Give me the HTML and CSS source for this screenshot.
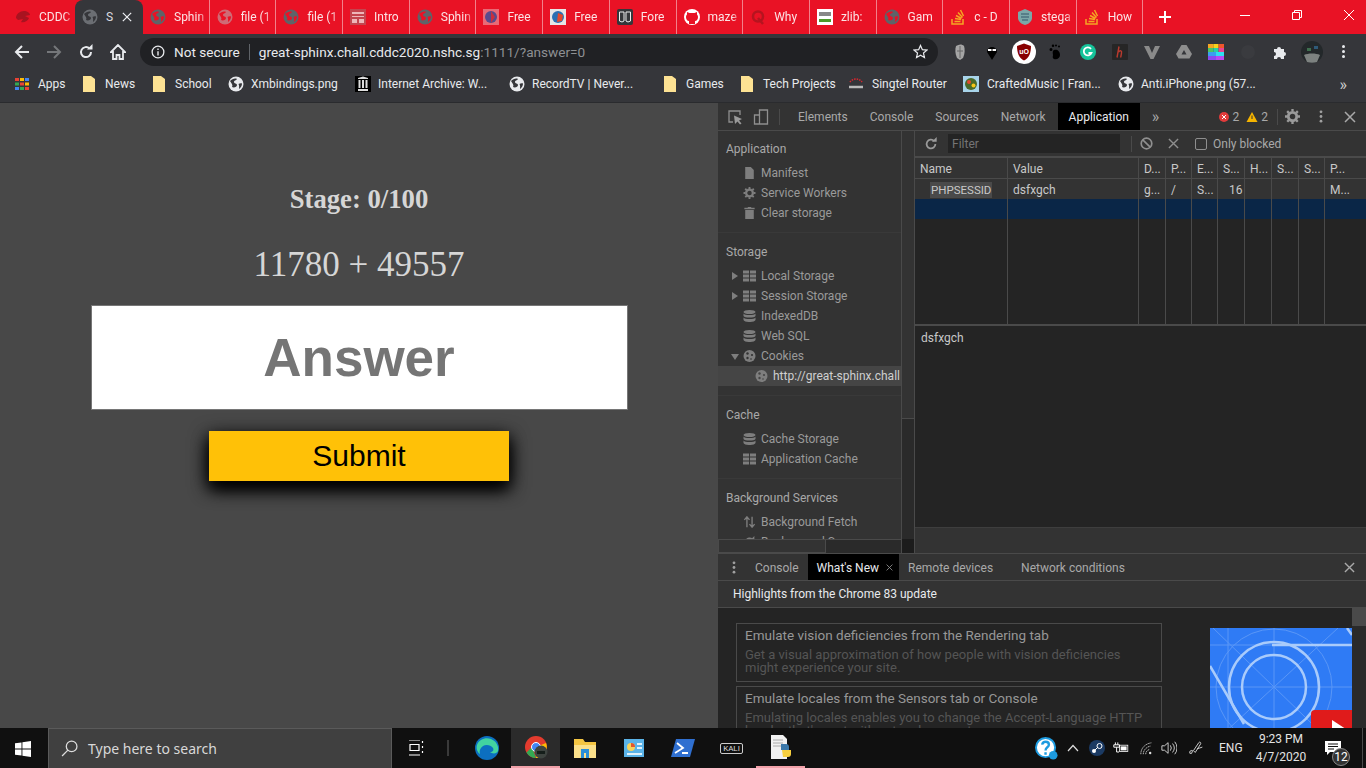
FILE: index.html
```html
<!DOCTYPE html>
<html lang="en">
<head>
    <meta charset="UTF-8">
    <meta name="viewport" content="width=device-width, initial-scale=1.0">
    <title>Sphinx</title>
    <link rel="stylesheet" href="styles.css">
</head>
<body>
    <svg class="defs" width="0" height="0">
        <symbol id="globe" viewBox="0 0 16 16">
            <circle cx="8" cy="8" r="7.5"/>
            <path class="cut" d="M2 5c2-2 5-3 7-2-1 2-3 1-3 3s3 1 3 3-3 3-5 2c1-2 0-3-2-6zM10.500 8c1-1 3-1 3.500-.5 0 2-1 4-3 5.500 0-2 .5-3-.5-5z"/>
        </symbol>
        <symbol id="folder" viewBox="0 0 12 16">
            <path d="M0 0h8l4 3v13H0z"/>
        </symbol>
        <symbol id="grid" viewBox="0 0 14 12">
            <path d="M0 0h6.500v3.400H0zM7.500 0H14v3.400H7.500zM0 4.300h6.500v3.400H0zM7.500 4.300H14v3.400H7.500zM0 8.600h6.500V12H0zM7.500 8.600H14V12H7.500z"/>
        </symbol>
        <symbol id="db" viewBox="0 0 12 12">
            <ellipse cx="6" cy="2" rx="6" ry="2"/>
            <path d="M0 3.500c1 2 11 2 12 0V6c-1 2-11 2-12 0zM0 7.500c1 2 11 2 12 0V10c-1 2.700-11 2.700-12 0z"/>
        </symbol>
        <symbol id="cookie" viewBox="0 0 12 12">
            <circle cx="6" cy="6" r="6"/>
            <g class="cut"><circle cx="4" cy="3.500" r="1.200"/><circle cx="8.500" cy="5" r="1.100"/><circle cx="4" cy="8" r="1.200"/><circle cx="7.500" cy="9" r=".8"/></g>
        </symbol>
        <symbol id="cross" viewBox="0 0 12 12">
            <path d="M1 1l10 10M11 1 1 11" fill="none" stroke="currentColor" stroke-width="1.500"/>
        </symbol>
        <symbol id="dots" viewBox="0 0 4 14">
            <circle cx="2" cy="2" r="1.500"/><circle cx="2" cy="7" r="1.500"/><circle cx="2" cy="12" r="1.500"/>
        </symbol>
        <symbol id="reload" viewBox="0 0 16 16">
            <path d="M13 8a5 5 0 1 1-1.500-3.500" fill="none" stroke="currentColor" stroke-width="2"/>
            <path d="M9 5.500h5.500V0z"/>
        </symbol>
    </svg>

    <!-- tab strip -->
    <div class="tabstrip">
        <div class="tab first"><svg class="fav" viewBox="0 0 16 16"><path fill="#a81320" d="M1 9c0-4 4-7 8-7 3 0 6 2 6 4l-5 1 4 2c-1 3-5 5-8 4l2-3-5 1z"/></svg><span class="tab-text">CDDC</span></div>
        <div class="tab active"><svg class="fav globe"><use href="#globe"/></svg><span class="tab-text">S</span><svg class="tab-close"><use href="#cross"/></svg></div>
        <div class="tab nosep"><svg class="fav globe"><use href="#globe"/></svg><span class="tab-text">Sphin</span></div>
        <div class="tab"><svg class="fav globe pale"><use href="#globe"/></svg><span class="tab-text">file (1</span></div>
        <div class="tab"><svg class="fav globe"><use href="#globe"/></svg><span class="tab-text">file (1</span></div>
        <div class="tab"><svg class="fav" viewBox="0 0 16 16"><rect width="16" height="16" fill="#c4454f"/><path fill="#eeb6ba" d="M2 3h12v2H2zM2 7h12v1H2zM2 10h5v4H2zM9 10h5v4H9z"/></svg><span class="tab-text">Intro</span></div>
        <div class="tab"><svg class="fav globe"><use href="#globe"/></svg><span class="tab-text">Sphin</span></div>
        <div class="tab"><svg class="fav" viewBox="0 0 16 16"><rect width="16" height="16" fill="#e96a76"/><circle cx="8" cy="8" r="6" fill="#5a4a8c"/><path fill="#c9303c" d="M8 2l4 6-4 6z"/></svg><span class="tab-text">Free</span></div>
        <div class="tab"><svg class="fav" viewBox="0 0 16 16"><rect width="16" height="16" fill="#e6e6e6"/><circle cx="8" cy="8" r="6" fill="#2a6fb3"/><path fill="#e2482e" d="M8 4l5 2-1 6-5 1z"/></svg><span class="tab-text">Free</span></div>
        <div class="tab"><svg class="fav" viewBox="0 0 16 16"><rect width="16" height="16" rx="2" fill="#35363a"/><path fill="none" stroke="#eee" d="M2.500 3h4.500v9l-2 1-2.500-1zM9 3h4.500v9l-2.500 1L9 12z"/></svg><span class="tab-text">Fore</span></div>
        <div class="tab"><svg class="fav" viewBox="0 0 16 16"><circle cx="8" cy="8" r="8" fill="#fff"/><path fill="#e91225" d="M5 15v-3c-2 0-3-2-3-4 0-1 .500-2 1-2.500V3l2.500 1h5L13 3v2.500c.500.500 1 1.500 1 2.500 0 2-1 4-3 4v3z"/></svg><span class="tab-text">maze</span></div>
        <div class="tab"><svg class="fav" viewBox="0 0 16 16"><circle cx="8" cy="7.500" r="5" fill="none" stroke="#b5141f" stroke-width="2.500"/><path stroke="#b5141f" stroke-width="2.500" d="M8 9l5 6"/></svg><span class="tab-text">Why</span></div>
        <div class="tab"><svg class="fav" viewBox="0 0 16 16"><rect width="16" height="16" fill="#fff"/><rect x="2" y="3" width="12" height="4" fill="#888"/><rect x="2" y="10" width="12" height="3" fill="#4c9a2a"/></svg><span class="tab-text">zlib:</span></div>
        <div class="tab"><svg class="fav globe"><use href="#globe"/></svg><span class="tab-text">Gam</span></div>
        <div class="tab"><svg class="fav" viewBox="0 0 16 16"><path fill="none" stroke="#f5a623" stroke-width="1.500" d="M2 10v5h11v-5M4.500 12.500h6M5 9.500l6 1M6 6.500l5.500 3M8 3.500l4.500 5M10.500 1l3 6"/></svg><span class="tab-text">c - D</span></div>
        <div class="tab"><svg class="fav" viewBox="0 0 16 16"><path fill="#7ba7a8" d="M8 0l7 3v6c0 3-3 6-7 7-4-1-7-4-7-7V3z"/><path stroke="#35566b" d="M4 5h8M4 8h8M5 11h6"/></svg><span class="tab-text">stega</span></div>
        <div class="tab"><svg class="fav" viewBox="0 0 16 16"><path fill="none" stroke="#f5a623" stroke-width="1.500" d="M2 10v5h11v-5M4.500 12.500h6M5 9.500l6 1M6 6.500l5.500 3M8 3.500l4.500 5M10.500 1l3 6"/></svg><span class="tab-text">How</span></div>
        <svg class="new-tab" viewBox="0 0 12 12"><path d="M6 0v12M0 6h12" stroke="#fff" stroke-width="2"/></svg>
        <div class="win-controls">
            <svg viewBox="0 0 12 12"><path d="M1 6.500h10" stroke="#fff"/></svg>
            <svg viewBox="0 0 12 12"><path d="M1.500 3.500h7v7h-7zM3.500 3.500v-2h7v7h-2" fill="none" stroke="#fff"/></svg>
            <svg viewBox="0 0 12 12"><path d="M1 1l10 10M11 1 1 11" stroke="#fff"/></svg>
        </div>
    </div>

    <!-- address bar -->
    <div class="toolbar">
        <div class="nav-btns">
            <svg viewBox="0 0 16 16"><path d="M15 8H2M8 2 2 8l6 6" fill="none" stroke="#e8eaed" stroke-width="2"/></svg>
            <svg viewBox="0 0 16 16"><path d="M1 8h13M8 2l6 6-6 6" fill="none" stroke="#75777a" stroke-width="2"/></svg>
            <svg class="plain" viewBox="0 0 16 16"><use href="#reload"/></svg>
            <svg viewBox="0 0 16 16"><path d="M8 1 1 8h2v7h3.500v-4h3v4H13V8h2z" fill="none" stroke="#e8eaed" stroke-width="1.800"/></svg>
        </div>
        <div class="omnibox">
            <svg class="info" viewBox="0 0 16 16"><circle cx="8" cy="8" r="6.700" fill="none" stroke="#e8eaed" stroke-width="1.500"/><path d="M7.200 7h1.600v5H7.200zM7.200 4h1.600v1.600H7.200z" fill="#e8eaed"/></svg>
            <span class="not-secure">Not secure</span>
            <span class="url">great-sphinx.chall.cddc2020.nshc.sg<span class="url-rest">:1111/?answer=0</span></span>
            <svg class="star" viewBox="0 0 16 16"><path d="M8 1.500 10 6l4.800.5-3.600 3.200 1 4.800L8 12l-4.200 2.500 1-4.800L1.200 6.500 6 6z" fill="none" stroke="#e8eaed" stroke-width="1.300"/></svg>
        </div>
        <div class="extensions">
            <svg viewBox="0 0 16 16"><path fill="#a5a5a5" d="M4 2c3-2 6-2 8 0 1 3 1 8-1 12l-3 2-3-2C3 10 3 5 4 2z"/><path stroke="#666" d="M8 2v12M5 7h6"/></svg>
            <svg viewBox="0 0 16 16"><path d="M8 16 3 8a5 5 0 1 1 10 0z"/><path fill="#fff" d="M4 5h3.500v2H4zM8.500 5H12v2H8.500z"/></svg>
            <svg class="ublock" viewBox="0 0 24 24"><circle cx="12" cy="12" r="12" fill="#fff"/><path fill="#800" d="M12 3.500 19 6c0 7-2 12-7 14.500C7 18 5 13 5 6z"/><text x="12" y="14" class="ub-text">uO</text></svg>
            <svg viewBox="0 0 16 16"><path d="M6 6c3-1 6 1 6 5 0 3-3 5-6 4-2-1-1-3-1-4S4 7 6 6zM3 7a1 1 0 1 1 0-3 1 1 0 0 1 0 3zM5 3a1 1 0 1 1 0-2.500A1 1 0 0 1 5 3zM8 2.500A1 1 0 1 1 8 .5a1 1 0 0 1 0 2zM11 3.500a1 1 0 1 1 0-2 1 1 0 0 1 0 2z"/></svg>
            <svg viewBox="0 0 16 16"><circle cx="8" cy="8" r="8" fill="#15c39a"/><path d="M11 5a4 4 0 1 0 .5 4H8.500" fill="none" stroke="#fff" stroke-width="1.800"/></svg>
            <svg viewBox="0 0 16 16"><rect width="16" height="16" rx="1" fill="#262626"/><path d="M7 2.500 5 13.500M6.500 8c2-2 3.500-1.500 3 1l-.8 4.500" fill="none" stroke="#b93a2e" stroke-width="1.400"/></svg>
            <svg viewBox="0 0 16 16"><path fill="#8a8a8a" d="M0 2h5l3 7 3-7h5L9.500 15h-3z"/></svg>
            <svg viewBox="0 0 16 16"><path fill="#8e8e8e" d="M5.500 1h5L16 10l-2.500 4.500h-11L0 10z"/><path fill="#35363a" d="M8 6l-2.500 4.500h5z"/></svg>
            <svg viewBox="0 0 16 16"><path fill="#f5a623" d="M0 0h5.300v4H0z"/><path fill="#f8d21c" d="M5.300 0h5.300v4H5.300z"/><path fill="#f0562c" d="M10.600 0H16v4h-5.400z"/><path fill="#4cc764" d="M0 4h5.300v4H0z"/><path fill="#2ad0a4" d="M5.300 4h5.300v4H5.300z"/><path fill="#e84393" d="M10.600 4H16v4h-5.400z"/><path fill="#3aa0f0" d="M0 8h8v4H0z"/><path fill="#2ee0f0" d="M8 8h8v4H8z"/><path fill="#8a4af0" d="M0 12h8v4H0z"/><path fill="#b84af0" d="M8 12h8v4H8z"/></svg>
            <svg viewBox="0 0 16 16"><circle cx="8" cy="8" r="7" fill="#3a3b3f"/></svg>
            <svg viewBox="0 0 16 16"><path fill="#e8eaed" d="M2 5h3a2 2 0 1 1 4 0h3v3a2 2 0 1 1 0 4v3H9a2 2 0 1 0-4 0H2v-3a2 2 0 1 0 0-4z"/></svg>
            <svg class="avatar" viewBox="0 0 22 22"><circle cx="11" cy="11" r="11" fill="#23282a"/><path fill="#7d8280" d="M3 14c4-2 12-2 16 0l-3 7c-3 1-7 1-10 0z"/><path fill="#2f5a78" d="M13 5h4v3h-4z"/><path fill="#3f6f4f" d="M6 7h4v3H6z"/></svg>
            <div class="menu-dots"><i></i><i></i><i></i></div>
        </div>
    </div>

    <!-- bookmarks -->
    <div class="bookmarks">
        <a class="bm bm-apps"><svg viewBox="0 0 14 12"><path fill="#ea4335" d="M0 0h4v3H0z"/><path fill="#fbbc05" d="M5 0h4v3H5z"/><path fill="#4285f4" d="M10 0h4v3h-4z"/><path fill="#34a853" d="M0 4.500h4v3H0z"/><path fill="#ea4335" d="M5 4.500h4v3H5z"/><path fill="#fbbc05" d="M10 4.500h4v3h-4z"/><path fill="#4285f4" d="M0 9h4v3H0z"/><path fill="#34a853" d="M5 9h4v3H5z"/><path fill="#ea4335" d="M10 9h4v3h-4z"/></svg>Apps</a>
        <a class="bm bm-news"><svg class="folder"><use href="#folder"/></svg>News</a>
        <a class="bm bm-school"><svg class="folder"><use href="#folder"/></svg>School</a>
        <a class="bm bm-xmb"><svg class="bm-globe"><use href="#globe"/></svg>Xmbindings.png</a>
        <a class="bm bm-ia"><svg viewBox="0 0 16 16"><rect width="16" height="16" fill="#000"/><path fill="#ddd" d="M3 2l5-1.500L13 2v1H3zM3.500 4h2v8h-2zM7 4h2v8H7zM10.500 4h2v8h-2zM3 13h10v2H3z"/></svg>Internet Archive: W...</a>
        <a class="bm bm-rec"><svg class="bm-globe"><use href="#globe"/></svg>RecordTV | Never...</a>
        <a class="bm bm-games"><svg class="folder"><use href="#folder"/></svg>Games</a>
        <a class="bm bm-tech"><svg class="folder"><use href="#folder"/></svg>Tech Projects</a>
        <a class="bm bm-singtel"><svg viewBox="0 0 16 16"><path d="M2 6a7 6 0 0 1 12 0" fill="none" stroke="#e0262e" stroke-width="1.500" stroke-dasharray="1.500 1"/><path d="M1 11h14" stroke="#bbb" stroke-width="2.500"/></svg>Singtel Router</a>
        <a class="bm bm-crafted"><svg viewBox="0 0 16 16"><rect width="16" height="16" fill="#a8d4ea"/><circle cx="8" cy="8" r="6" fill="#4a6a2a"/><circle cx="6" cy="6" r="2" fill="#e2482e"/><circle cx="10.500" cy="9.500" r="2" fill="#f5c518"/></svg>CraftedMusic | Fran...</a>
        <a class="bm bm-anti"><svg class="bm-globe"><use href="#globe"/></svg>Anti.iPhone.png (57...</a>
        <span class="bm-more">»</span>
    </div>

    <div class="main">
        <!-- the page itself -->
        <form class="page">
            <h3 class="stage">Stage: 0/100</h3>
            <p class="sum">11780 + 49557</p>
            <input class="answer" type="text" placeholder="Answer">
            <button class="submit" type="button">Submit</button>
        </form>

        <!-- devtools -->
        <div class="devtools">
            <div class="dt-tabs">
                <svg class="dt-ico" viewBox="0 0 16 16"><path d="M13 6V2H2v11h4" fill="none" stroke="#8f8f8f" stroke-width="1.300"/><path d="M7 6.500 15 10l-3 1.500 2.500 3-1.500 1-2.500-3L8 15z" fill="#9a9a9a"/></svg>
                <svg class="dt-ico" viewBox="0 0 16 16"><path d="M6.500 1h8v14h-8zM6.500 6h-5v9h5" fill="none" stroke="#8f8f8f" stroke-width="1.300"/></svg>
                <span class="dt-divider"></span>
                <span class="dt-tab">Elements</span>
                <span class="dt-tab">Console</span>
                <span class="dt-tab">Sources</span>
                <span class="dt-tab">Network</span>
                <span class="dt-tab current">Application</span>
                <span class="dt-more">»</span>
                <div class="dt-status">
                    <svg viewBox="0 0 12 12"><circle cx="6" cy="6" r="5" fill="#e23b3b"/><path d="M4 4l4 4M8 4l-4 4" stroke="#fff"/></svg><span>2</span>
                    <svg viewBox="0 0 12 12"><path d="M6 1l5.500 10H.5z" fill="#f5b400"/><path d="M6 4.500v3.500" stroke="#333"/></svg><span>2</span>
                    <span class="dt-divider"></span>
                    <svg class="gear" viewBox="0 0 16 16"><circle cx="8" cy="8" r="4.500" fill="none" stroke="#9a9a9a" stroke-width="3"/><path d="M8 0v16M0 8h16M2.300 2.300l11.400 11.400M13.700 2.300 2.300 13.700" stroke="#9a9a9a" stroke-width="2.500" stroke-dasharray="2.500 11 2.500"/></svg>
                    <svg class="dt-dots"><use href="#dots"/></svg>
                    <svg class="dt-close"><use href="#cross"/></svg>
                </div>
            </div>

            <div class="dt-body">
                <div class="sidebar-wrap">
                    <div class="sidebar">
                        <div class="side-group">
                            <div class="side-head">Application</div>
                            <div class="side-row"><svg class="side-ico" viewBox="0 0 12 14"><path d="M1 0h6.500L11 3.500V14H1z"/></svg>Manifest</div>
                            <div class="side-row"><svg class="side-ico" viewBox="0 0 16 16"><circle cx="8" cy="8" r="4.500" fill="none" stroke="currentColor" stroke-width="3"/><path d="M8 0v16M0 8h16M2.300 2.300l11.400 11.400M13.700 2.300 2.300 13.700" stroke="currentColor" stroke-width="2.500" stroke-dasharray="2.500 11 2.500"/></svg>Service Workers</div>
                            <div class="side-row"><svg class="side-ico" viewBox="0 0 12 14"><path d="M4 0h4v1h4v1.500H0V1h4zM1 3.500h10V14H1z"/></svg>Clear storage</div>
                        </div>
                        <div class="side-group">
                            <div class="side-head">Storage</div>
                            <div class="side-row arrow"><svg class="side-ico"><use href="#grid"/></svg>Local Storage</div>
                            <div class="side-row arrow"><svg class="side-ico"><use href="#grid"/></svg>Session Storage</div>
                            <div class="side-row"><svg class="side-ico"><use href="#db"/></svg>IndexedDB</div>
                            <div class="side-row"><svg class="side-ico"><use href="#db"/></svg>Web SQL</div>
                            <div class="side-row arrow open"><svg class="side-ico"><use href="#cookie"/></svg>Cookies</div>
                            <div class="side-row sub selected"><svg class="side-ico"><use href="#cookie"/></svg><span class="side-clip">http://great-sphinx.chall</span></div>
                        </div>
                        <div class="side-group">
                            <div class="side-head">Cache</div>
                            <div class="side-row"><svg class="side-ico"><use href="#db"/></svg>Cache Storage</div>
                            <div class="side-row"><svg class="side-ico"><use href="#grid"/></svg>Application Cache</div>
                        </div>
                        <div class="side-group last">
                            <div class="side-head">Background Services</div>
                            <div class="side-row"><svg class="side-ico" viewBox="0 0 14 14"><path d="M4 13V2M1 4.500 4 1l3 3.500M10 1v11M7 9.500l3 3.500 3-3.500" fill="none" stroke="currentColor" stroke-width="1.600"/></svg>Background Fetch</div>
                            <div class="side-row"><svg class="side-ico" viewBox="0 0 16 16"><use href="#reload"/></svg>Background Sync</div>
                        </div>
                    </div>
                    <div class="side-hscroll"><div class="side-hthumb"></div></div>
                </div>
                <div class="side-vscroll"><div class="side-vthumb"></div><div class="side-corner"></div></div>

                <div class="cookies">
                    <div class="ck-toolbar">
                        <svg class="ck-reload"><use href="#reload"/></svg>
                        <input class="ck-filter" type="text" placeholder="Filter">
                        <span class="ck-divider"></span>
                        <svg class="ck-block" viewBox="0 0 14 14"><circle cx="7" cy="7" r="5.700" fill="none" stroke="currentColor" stroke-width="1.800"/><path d="M3 3l8 8" stroke="currentColor" stroke-width="1.800"/></svg>
                        <svg class="ck-x"><use href="#cross"/></svg>
                        <span class="ck-check"></span>
                        <span class="ck-label">Only blocked</span>
                    </div>
                    <div class="ck-table">
                        <div class="ck-row head"><span>Name</span><span>Value</span><span>D...</span><span>P...</span><span>E...</span><span>S...</span><span>H...</span><span>S...</span><span>S...</span><span>P...</span></div>
                        <div class="ck-row data"><span class="ck-name"><b>PHPSESSID</b></span><span>dsfxgch</span><span>g...</span><span>/</span><span>S...</span><span class="num">16</span><span></span><span></span><span></span><span>M...</span></div>
                        <div class="ck-row blank"><span></span><span></span><span></span><span></span><span></span><span></span><span></span><span></span><span></span><span></span></div>
                        <div class="ck-row rest"><span></span><span></span><span></span><span></span><span></span><span></span><span></span><span></span><span></span><span></span></div>
                    </div>
                    <div class="ck-value">dsfxgch</div>
                    <div class="ck-foot"></div>
                </div>
            </div>

            <div class="drawer">
                <div class="dr-tabs">
                    <svg class="dr-dots"><use href="#dots"/></svg>
                    <span class="dr-tab console">Console</span>
                    <span class="dr-tab current">What's New <svg class="dr-x"><use href="#cross"/></svg></span>
                    <span class="dr-tab remote">Remote devices</span>
                    <span class="dr-tab">Network conditions</span>
                    <svg class="dt-close"><use href="#cross"/></svg>
                </div>
                <div class="dr-title">Highlights from the Chrome 83 update</div>
                <div class="dr-content">
                    <div class="news">
                        <div class="news-card">
                            <h4>Emulate vision deficiencies from the Rendering tab</h4>
                            <p>Get a visual approximation of how people with vision deficiencies might experience your site.</p>
                        </div>
                        <div class="news-card">
                            <h4>Emulate locales from the Sensors tab or Console</h4>
                            <p>Emulating locales enables you to change the Accept-Language HTTP header that's sent with network requests.</p>
                        </div>
                    </div>
                    <svg class="news-pic" viewBox="0 0 142 130">
                        <rect width="142" height="130" fill="#2f7bf5"/>
                        <g fill="none" stroke="#5a97f7"><circle cx="64" cy="59" r="58"/><path d="M64 0v130M0 59h142M0 17h142M18 0v130M3 0l122 118M128 0 0 118"/></g>
                        <g fill="none" stroke="#a9cbfb" stroke-width="2.500"><circle cx="64" cy="59" r="32"/><circle cx="64" cy="59" r="45"/><path d="M62 17h80M0 38l34 58M137 0l5 7"/></g>
                        <rect x="101" y="82" width="45" height="48" rx="4" fill="#e01b1b"/>
                        <path d="M122 92v26l20-13z" fill="#fff"/>
                    </svg>
                    <div class="dr-scroll"><div class="dr-thumb"></div></div>
                </div>
            </div>
        </div>
    </div>

    <!-- windows taskbar -->
    <div class="taskbar">
        <svg class="start" viewBox="0 0 16 16"><path fill="#fff" d="M0 2.300 6.500 1.400v6.200H0zM7.400 1.300 16 0v7.600H7.400zM0 8.400h6.500v6.200L0 13.700zM7.400 8.400H16V16l-8.600-1.200z"/></svg>
        <div class="search">
            <svg viewBox="0 0 16 16"><circle cx="10" cy="6" r="5" fill="none" stroke="#ddd" stroke-width="1.200"/><path d="M6.500 9.500 1 15" stroke="#ddd" stroke-width="1.200"/></svg>
            <span>Type here to search</span>
        </div>
        <div class="task-items">
            <div class="task"><svg viewBox="0 0 16 16"><path d="M0 0h11M0 15h11M1 4.500h9v6H1zM13.500 1v2M13.500 6v2M13.500 11v2" fill="none" stroke="#fff" stroke-width="1.200"/></svg></div>
            <span class="task-sep"></span>
            <div class="task"><svg class="big" viewBox="0 0 24 24"><circle cx="12" cy="12" r="12" fill="#0c6fc0"/><path d="M2 9c2-6 9-8 14-6 5 2 8 7 7 12-1 3-6 3-8 1 3 0 4-2 3-4-2-3-7-4-10-2-3 2-4 5-3 8C2 16 1 12 2 9z" fill="#42d3a0"/></svg></div>
            <div class="task open active"><svg class="big" viewBox="0 0 24 24"><circle cx="12" cy="12" r="11" fill="#e33b2e"/><path d="M12 12l10-4a11 11 0 0 1-10 15z" fill="#fbbc05"/><path d="M2.500 17.500 8 12l4 11a11 11 0 0 1-9.500-5.500z" fill="#34a853"/><circle cx="12" cy="12" r="4.500" fill="#4285f4" stroke="#fff"/><circle cx="17" cy="17" r="6.500" fill="#3e4440"/><path d="M13 16h8v3h-8z" fill="#151e1a"/></svg></div>
            <div class="task"><svg class="big" viewBox="0 0 24 24"><path d="M1 3h9l2 3h11v16H1z" fill="#f4c542"/><path d="M1 9h22v13H1z" fill="#fbe08a"/><path d="M8 13h8v9h-3v-5h-2v5H8z" fill="#2a8fd8"/></svg></div>
            <div class="task"><svg class="big" viewBox="0 0 24 24"><rect x="2" y="3" width="20" height="18" fill="#5ab3e8"/><circle cx="9" cy="11" r="4" fill="#f6d35a"/><path d="M9 11V7a4 4 0 0 1 4 4z" fill="#e2562e"/><path d="M15 7h5v2h-5zM15 11h5v2h-5zM5 17h15v2H5z" fill="#e0f2fc"/></svg></div>
            <div class="task"><svg class="big" viewBox="0 0 24 24"><path d="M5 3h19l-5 18H0z" fill="#2f6fd0"/><path d="M6 7l6 5-8 5M11 17h6" fill="none" stroke="#fff" stroke-width="1.800"/></svg></div>
            <div class="task"><span class="kali">KALI</span></div>
            <div class="task open"><svg class="big" viewBox="0 0 24 24"><path d="M2 0h12l4 4v20H2z" fill="#f1f1f1"/><path d="M4 5h10M4 8h10M4 11h8" stroke="#aaa"/><path d="M12 9h5a3 3 0 0 1 3 3v3h-8z" fill="#3b78aa"/><path d="M14 22h5a3 3 0 0 0 3-3v-4h-9z" fill="#f7cf3e"/></svg></div>
        </div>
        <div class="tray">
            <svg class="tr-help" viewBox="0 0 24 24"><circle cx="11" cy="11" r="10" fill="#fff" stroke="#1d9be0" stroke-width="2"/><path d="M7.500 8c.500-4 7-4 7 0 0 3-3.500 2.500-3.500 6M11 16v2.500" fill="none" stroke="#1d9be0" stroke-width="2.500"/><circle cx="19" cy="19" r="4.500" fill="#1d9be0"/></svg>
            <svg class="tr-up" viewBox="0 0 12 8"><path d="M1 7l5-5.500L11 7" fill="none" stroke="#ddd" stroke-width="1.200"/></svg>
            <svg class="tr-steam" viewBox="0 0 16 16"><circle cx="8" cy="8" r="8" fill="#1b3a63"/><circle cx="10.500" cy="6" r="2.500" fill="none" stroke="#fff"/><circle cx="5" cy="11" r="2" fill="#fff"/><path d="M5 11l4-4" stroke="#fff"/></svg>
            <svg class="tr-batt" viewBox="0 0 20 14"><path d="M3 0v3M6 0v3M1 3h7v3H1zM4.500 6v6h3" fill="none" stroke="#fff" stroke-width="1.200"/><rect x="8" y="3.500" width="10.500" height="8" fill="none" stroke="#fff"/><rect x="9.500" y="5" width="7.500" height="5" fill="#fff"/></svg>
            <svg class="tr-wifi" viewBox="0 0 16 16"><path d="M1 15C1 7 7 2 14 1M4 15c0-5 4-9 9-10M7 15c0-3 2-5 5-6" fill="none" stroke="#ddd" stroke-dasharray="2 .8"/><circle cx="12.500" cy="13.500" r="1.500" fill="#ddd"/></svg>
            <svg class="tr-vol" viewBox="0 0 18 16"><path d="M1 5.500h3L8 2v12L4 10.500H1z" fill="none" stroke="#ddd"/><path d="M10.500 5a5 5 0 0 1 0 6M13 3a8 8 0 0 1 0 10M15.500 1a11 11 0 0 1 0 14" fill="none" stroke="#ddd"/></svg>
            <svg class="tr-pen" viewBox="0 0 18 16"><path d="M1 14c-1-2 1-4 3-3l-1 3zM5 11l6-9c1-1.500 3 0 2 1.500L7 13zM9 9c2-1 4-1 6-2" fill="none" stroke="#ddd"/></svg>
            <span class="tr-lang">ENG</span>
            <div class="tr-clock"><span>9:23 PM</span><span>4/7/2020</span></div>
            <div class="tr-note">
                <svg viewBox="0 0 16 14"><path d="M0 0h16v11H5l-3 3v-3H0z" fill="#fff"/><path d="M3 3h10M3 5.500h10M3 8h6" stroke="#111"/></svg>
                <span class="tr-badge">12</span>
            </div>
            <span class="tr-edge"></span>
        </div>
    </div>
</body>
</html>
```

FILE: styles.css
```css
* {
    box-sizing: border-box;
}
html, body {
    margin: 0;
    height: 100%;
    overflow: hidden;
}
body {
    display: flex;
    flex-direction: column;
    width: 1366px;
    height: 768px;
    font-family: Roboto, "Noto Sans", sans-serif;
    font-size: 12px;
    color: #e8eaed;
    background: #35363a;
}
svg {
    display: block;
    flex: none;
}
.defs {
    position: absolute;
}
.cut {
    fill: var(--cut, #e91225);
}

/* tab strip */
.tabstrip {
    display: flex;
    align-items: stretch;
    flex: none;
    height: 34px;
    padding-left: 8px;
    background: #e91225;
}
.tab {
    display: flex;
    align-items: center;
    flex: none;
    width: 66.7px;
    height: 34px;
    padding-left: 7px;
    gap: 8px;
    border-right: 1px solid #f2808a;
    overflow: hidden;
}
.tab.first {
    width: 67px;
    border-right: 0;
}
.tab.active {
    --cut: #35363a;
    width: 68px;
    background: #35363a;
    border-right: 0;
    border-radius: 8px 8px 0 0;
}
.tab-text {
    flex: 1;
    min-width: 0;
    font-size: 12px;
    white-space: nowrap;
    color: #fbe3e5;
    -webkit-mask-image: linear-gradient(to right, #000 70%, transparent 100%);
    mask-image: linear-gradient(to right, #000 70%, transparent 100%);
}
.tab.active .tab-text {
    flex: none;
    width: 8px;
    color: #dcdde0;
    -webkit-mask-image: none;
    mask-image: none;
}
.fav {
    width: 16px;
    height: 16px;
}
.fav.globe {
    fill: #5f6368;
}
.fav.pale {
    fill: #cf6a75;
}
.tab.active .fav.globe {
    fill: #6b6e73;
}
.tab-close {
    width: 10px;
    height: 10px;
    color: #e8eaed;
}
.new-tab {
    width: 12px;
    height: 12px;
    margin: 11px 0 0 16px;
}
.win-controls {
    display: flex;
    margin-left: auto;
    padding-top: 9px;
    padding-right: 11px;
    gap: 40px;
}
.win-controls svg {
    width: 12px;
    height: 12px;
}

/* toolbar */
.toolbar {
    display: flex;
    align-items: center;
    flex: none;
    height: 35px;
    padding-left: 14px;
    background: #35363a;
}
.nav-btns {
    display: flex;
    gap: 16px;
}
.nav-btns svg {
    width: 16px;
    height: 16px;
}
.nav-btns .plain {
    fill: #e8eaed;
    color: #e8eaed;
}
.omnibox {
    display: flex;
    align-items: center;
    width: 798px;
    height: 28px;
    margin-left: 14px;
    padding-left: 11px;
    background: #202124;
    border-radius: 14px;
    font-size: 13.6px;
}
.info {
    width: 14px;
    height: 14px;
}
.not-secure {
    margin-left: 9px;
    padding-right: 9px;
    border-right: 1px solid #5f6368;
    line-height: 16px;
}
.url {
    margin-left: 9px;
    color: #e8eaed;
}
.url-rest {
    color: #8e9093;
}
.star {
    width: 15px;
    height: 15px;
    margin-left: auto;
    margin-right: 10px;
}
.extensions {
    display: flex;
    align-items: center;
    margin-left: 14px;
    gap: 16px;
}
.extensions svg {
    width: 16px;
    height: 16px;
}
.extensions .ublock {
    width: 24px;
    height: 24px;
    margin: 0 -4px;
}
.ub-text {
    font-family: "Liberation Sans", sans-serif;
    font-size: 7px;
    font-weight: bold;
    fill: #fff;
    text-anchor: middle;
}
.extensions .avatar {
    width: 22px;
    height: 22px;
    margin: 0 -3px;
}
.menu-dots {
    display: flex;
    flex-direction: column;
    gap: 2px;
    margin-left: 6px;
}
.menu-dots i {
    width: 3px;
    height: 3px;
    border-radius: 50%;
    background: #e8eaed;
}

/* bookmarks */
.bookmarks {
    --cut: #35363a;
    display: flex;
    align-items: center;
    flex: none;
    height: 34px;
    padding-left: 15px;
    padding-bottom: 3px;
    background: #35363a;
    border-bottom: 1px solid #2a2b2e;
}
.bm {
    display: flex;
    align-items: center;
    flex: none;
    gap: 7px;
    color: #e8eaed;
    white-space: nowrap;
}
.bm svg {
    width: 16px;
    height: 16px;
}
.bm-apps svg {
    width: 14px;
    height: 12px;
}
.bm .folder {
    width: 12px;
    height: 16px;
    fill: #fde293;
}
.bm .bm-globe {
    fill: #e8eaed;
}
.bm-apps { width: 68px; gap: 9px; }
.bm-news { width: 70px; gap: 10px; }
.bm-school { width: 75px; gap: 10px; }
.bm-xmb { width: 127px; }
.bm-ia { width: 154px; }
.bm-rec { width: 155px; }
.bm-games { width: 77px; gap: 10px; }
.bm-tech { width: 107px; gap: 10px; }
.bm-singtel { width: 115px; gap: 8px; }
.bm-crafted { width: 155px; gap: 8px; }
.bm-more {
    margin-left: auto;
    padding-right: 19px;
    font-size: 16px;
    color: #d0d0d0;
}

/* page */
.main {
    display: flex;
    flex: 1;
    min-height: 0;
}
.page {
    display: flex;
    flex-direction: column;
    align-items: center;
    flex: none;
    width: 718px;
    padding-top: 81px;
    background: #484848;
    color: #d6d6d6;
    font-family: "Liberation Serif", serif;
}
.stage {
    margin: 0;
    font-size: 26.7px;
    line-height: 30px;
}
.sum {
    margin: 31px 0 0;
    font-size: 35px;
    line-height: 40px;
}
.answer {
    display: block;
    width: 537px;
    height: 105px;
    margin-top: 20px;
    border: 1px solid #767676;
    background: #fff;
    font-family: "Liberation Sans", sans-serif;
    font-size: 53px;
    font-weight: bold;
    text-align: center;
    outline: none;
}
.answer::placeholder {
    color: #757575;
    opacity: 1;
}
.submit {
    display: block;
    width: 300px;
    height: 50px;
    margin-top: 21px;
    border: 0;
    background: #ffc107;
    color: #000;
    font-family: "Liberation Sans", sans-serif;
    font-size: 30px;
    box-shadow: 0 8px 16px 0 #000, 0 6px 20px 0 #000;
}

/* devtools */
.devtools {
    display: flex;
    flex-direction: column;
    flex: 1;
    min-width: 0;
    background: #333;
    color: #a9a9a9;
}
.dt-tabs {
    display: flex;
    align-items: center;
    flex: none;
    height: 28px;
    padding-left: 9px;
    border-bottom: 1px solid #4a4a4a;
}
.dt-ico {
    width: 16px;
    height: 16px;
    margin-right: 10px;
}
.dt-divider {
    width: 1px;
    height: 16px;
    background: #4a4a4a;
}
.dt-tab {
    display: flex;
    align-items: center;
    height: 27px;
    padding: 0 11px;
    color: #a9a9a9;
}
.dt-divider + .dt-tab {
    margin-left: 7px;
}
.dt-tab.current {
    margin-left: 1px;
    background: #000;
    color: #e8eaed;
}
.dt-more {
    margin-left: 12px;
    font-size: 16px;
}
.dt-status {
    display: flex;
    align-items: center;
    margin-left: auto;
    padding-right: 10px;
}
.dt-status svg {
    width: 12px;
    height: 12px;
}
.dt-status span {
    margin: 0 7px 0 3px;
}
.dt-status .dt-divider {
    margin: 0 7px 0 2px;
}
.dt-status .gear {
    width: 15px;
    height: 15px;
}
.dt-status .dt-dots {
    width: 4px;
    height: 13px;
    margin: 0 21px 0 19px;
    fill: #a0a0a0;
}
.dt-close {
    width: 11px;
    height: 11px;
    color: #a9a9a9;
}
.dt-body {
    display: flex;
    height: 423px;
    flex: none;
    border-bottom: 1px solid #4a4a4a;
}
.sidebar-wrap {
    display: flex;
    flex-direction: column;
    flex: none;
    width: 183px;
    min-height: 0;
}
.sidebar {
    flex: 1;
    min-height: 0;
    overflow: hidden;
}
.side-group {
    padding: 9px 0 9px;
    border-bottom: 1px solid #393939;
}
.side-group:first-child {
    padding: 8px 0 9px;
}
.side-group.last {
    border-bottom: 0;
}
.side-head {
    padding-left: 8px;
    height: 20px;
    line-height: 20px;
    margin-bottom: 4px;
    color: #a9a9a9;
}
.side-row {
    --cut: #333;
    position: relative;
    display: flex;
    align-items: center;
    gap: 5px;
    height: 20px;
    padding-left: 25px;
    white-space: nowrap;
    overflow: hidden;
    color: #9a9a9a;
    fill: #7e7e7e;
}
.side-ico {
    width: 13px;
    height: 12px;
    color: #7e7e7e;
}
.side-row.arrow::before {
    content: "";
    position: absolute;
    left: 14px;
    top: 6px;
    border-left: 6px solid #7e7e7e;
    border-top: 4px solid transparent;
    border-bottom: 4px solid transparent;
}
.side-row.arrow.open::before {
    left: 13px;
    top: 8px;
    border-top: 6px solid #7e7e7e;
    border-left: 4px solid transparent;
    border-right: 4px solid transparent;
    border-bottom: 0;
}
.side-row.sub {
    padding-left: 37px;
    color: #d0d0d0;
}
.side-row.selected {
    --cut: #454545;
    background: #454545;
}
.side-hscroll {
    flex: none;
    height: 14px;
    background: #2a2a2a;
    border-top: 1px solid #4a4a4a;
}
.side-hthumb {
    width: 108px;
    height: 13px;
    background: #333;
    border: 1px solid #4a4a4a;
    border-top: 0;
}
.side-vscroll {
    display: flex;
    flex-direction: column;
    flex: none;
    width: 14px;
    background: #2a2a2a;
    border-left: 1px solid #4a4a4a;
    border-right: 1px solid #4a4a4a;
}
.side-vthumb {
    height: 288px;
    background: #333;
    border-bottom: 1px solid #4a4a4a;
}
.side-corner {
    height: 14px;
    margin-top: auto;
    background: #1c1c1c;
}
.cookies {
    display: flex;
    flex-direction: column;
    flex: 1;
    min-width: 0;
    background: #242424;
}
.ck-toolbar {
    display: flex;
    align-items: center;
    flex: none;
    height: 26px;
    padding-left: 9px;
    background: #333;
    border-bottom: 1px solid #4a4a4a;
}
.ck-reload {
    width: 14px;
    height: 14px;
    color: #9a9a9a;
    fill: #9a9a9a;
}
.ck-filter {
    width: 172px;
    height: 19px;
    margin-left: 10px;
    padding: 0 4px;
    border: 0;
    background: #242424;
    font: 12px Roboto, sans-serif;
    color: #ddd;
    outline: none;
}
.ck-filter::placeholder {
    color: #757575;
    opacity: 1;
}
.ck-divider {
    width: 1px;
    height: 16px;
    margin-left: 11px;
    background: #4a4a4a;
}
.ck-block {
    width: 13px;
    height: 13px;
    margin-left: 8px;
    color: #8f8f8f;
}
.ck-x {
    width: 11px;
    height: 11px;
    margin-left: 15px;
    color: #8f8f8f;
}
.ck-check {
    width: 12px;
    height: 12px;
    margin-left: 16px;
    border: 1px solid #8f8f8f;
    border-radius: 2px;
}
.ck-label {
    margin-left: 6px;
    color: #a9a9a9;
}
.ck-table {
    display: flex;
    flex-direction: column;
    flex: none;
    height: 169px;
    border-bottom: 2px solid #4a4a4a;
}
.ck-row {
    display: grid;
    grid-template-columns: 93px 131px 27px 26px 26px 27px 27px 27px 26px 1fr;
    flex: none;
    height: 20px;
}
.ck-row span {
    display: flex;
    align-items: center;
    padding-left: 5px;
    padding-top: 1px;
    border-right: 1px solid #4a4a4a;
    overflow: hidden;
    white-space: nowrap;
    color: #c8c8c8;
}
.ck-row span:last-child {
    border-right: 0;
}
.ck-row.head {
    height: 22px;
    background: #333;
    border-top: 1px solid #4a4a4a;
    border-bottom: 1px solid #4a4a4a;
}
.ck-row.data {
    background: #333;
}
.ck-row .ck-name {
    padding-left: 15px;
}
.ck-name b {
    padding: 1px;
    font-size: 11.5px;
    font-weight: normal;
    background: #4a4a4a;
}
.ck-row .num {
    padding-left: 11px;
}
.ck-row.blank {
    background: #0a2647;
}
.ck-row.rest {
    flex: 1;
}
.ck-value {
    flex: 1;
    padding: 5px 6px;
    color: #c8c8c8;
}
.ck-foot {
    flex: none;
    height: 26px;
    background: #333;
    border-top: 1px solid #3e3e3e;
}

/* drawer */
.drawer {
    display: flex;
    flex-direction: column;
    flex: 1;
    min-height: 0;
}
.dr-tabs {
    display: flex;
    align-items: center;
    flex: none;
    height: 27px;
    padding-left: 14px;
    border-bottom: 1px solid #4a4a4a;
}
.dr-dots {
    width: 4px;
    height: 13px;
    margin-right: 14px;
    fill: #a0a0a0;
}
.dr-tab {
    display: flex;
    align-items: center;
    gap: 7px;
    height: 26px;
    padding: 1px 9px 0;
    color: #a9a9a9;
}
.dr-tab.console {
    padding-right: 9px;
    padding-left: 5px;
}
.dr-tab.remote {
    margin-right: 10px;
}
.dr-tab.current {
    background: #000;
    color: #e8eaed;
    padding-right: 6px;
}
.dr-x {
    width: 7px;
    height: 7px;
    color: #8f8f8f;
}
.dr-tabs .dt-close {
    margin-left: auto;
    margin-right: 11px;
}
.dr-title {
    display: flex;
    align-items: center;
    flex: none;
    height: 27px;
    padding-left: 15px;
    color: #e8eaed;
    border-bottom: 1px solid #4a4a4a;
}
.dr-content {
    display: flex;
    flex: 1;
    min-height: 0;
    overflow: hidden;
    background: #242424;
}
.news {
    flex: none;
    width: 426px;
    margin: 15px 0 0 18px;
}
.news-card {
    height: 59px;
    margin-bottom: 4px;
    padding: 3px 8px;
    border: 1px solid #4a4a4a;
}
.news-card + .news-card {
    height: 70px;
}
.news-card h4 {
    margin: 0 0 5px;
    font-size: 13.5px;
    font-weight: normal;
    line-height: 16px;
    color: #979797;
}
.news-card p {
    margin: 0;
    font-size: 13px;
    line-height: 13px;
    color: #555;
}
.news-pic {
    width: 142px;
    height: 130px;
    margin: 20px 0 0 48px;
}
.dr-scroll {
    flex: none;
    width: 14px;
    margin-left: auto;
    background: #2a2a2a;
}
.dr-thumb {
    height: 18px;
    background: #4a4a4a;
}

/* taskbar */
.taskbar {
    display: flex;
    align-items: stretch;
    flex: none;
    height: 40px;
    background: #101010;
}
.start {
    width: 16px;
    height: 16px;
    margin: 13px 17px 0 15px;
}
.search {
    display: flex;
    align-items: center;
    gap: 10px;
    width: 344px;
    padding-left: 12px;
    background: #404040;
    border: 1px solid #5a5a5a;
    border-bottom: 0;
    font-family: "Noto Sans", sans-serif;
    font-size: 14px;
    color: #d8d8d8;
}
.search svg {
    width: 17px;
    height: 17px;
}
.task-items {
    display: flex;
    align-items: center;
    height: 40px;
}
.task {
    display: flex;
    align-items: center;
    justify-content: center;
    width: 49px;
    height: 40px;
}
.task svg {
    width: 16px;
    height: 16px;
}
.task svg.big {
    width: 24px;
    height: 24px;
}
.task.open {
    border-bottom: 2px solid #f0a0a8;
}
.task.active {
    background: #2b2b2b;
}
.task-sep {
    width: 2px;
    height: 16px;
    margin: 0 13px 0 6px;
    background: #3a3a3a;
}
.kali {
    padding: 0 2px;
    border: 1px solid #ccc;
    border-radius: 2px;
    font-size: 8px;
    line-height: 9px;
    color: #ddd;
}
.tray {
    display: flex;
    align-items: center;
    margin-left: auto;
    color: #e4e4e4;
}
.tray svg {
    height: 16px;
    width: 16px;
}
.tray .tr-help {
    width: 23px;
    height: 23px;
}
.tray .tr-up {
    width: 12px;
    height: 8px;
    margin-left: 9px;
}
.tray .tr-steam {
    margin-left: 10px;
}
.tray .tr-batt {
    height: 12px;
    margin-left: 8px;
}
.tray .tr-wifi {
    width: 13px;
    height: 13px;
    margin-left: 11px;
}
.tray .tr-vol {
    margin-left: 8px;
}
.tray .tr-pen {
    margin-left: 12px;
}
.tr-lang {
    width: 23px;
    margin-left: 14px;
    white-space: nowrap;
}
.tr-clock {
    display: flex;
    flex-direction: column;
    align-items: center;
    gap: 4px;
    width: 68px;
    margin-left: 5px;
    line-height: 14px;
}
.tr-note {
    position: relative;
    width: 25px;
    margin: 0 12px 0 10px;
}
.tray .tr-note svg {
    width: 16px;
    height: 14px;
}
.tr-badge {
    position: absolute;
    left: 7px;
    top: 7px;
    width: 18px;
    height: 18px;
    border: 1px solid #888;
    border-radius: 50%;
    background: #333;
    color: #fff;
    font-size: 12px;
    line-height: 16px;
    text-align: center;
}
.tr-edge {
    width: 1px;
    height: 40px;
    margin-right: 3px;
    background: #4a4a4a;
}
```
